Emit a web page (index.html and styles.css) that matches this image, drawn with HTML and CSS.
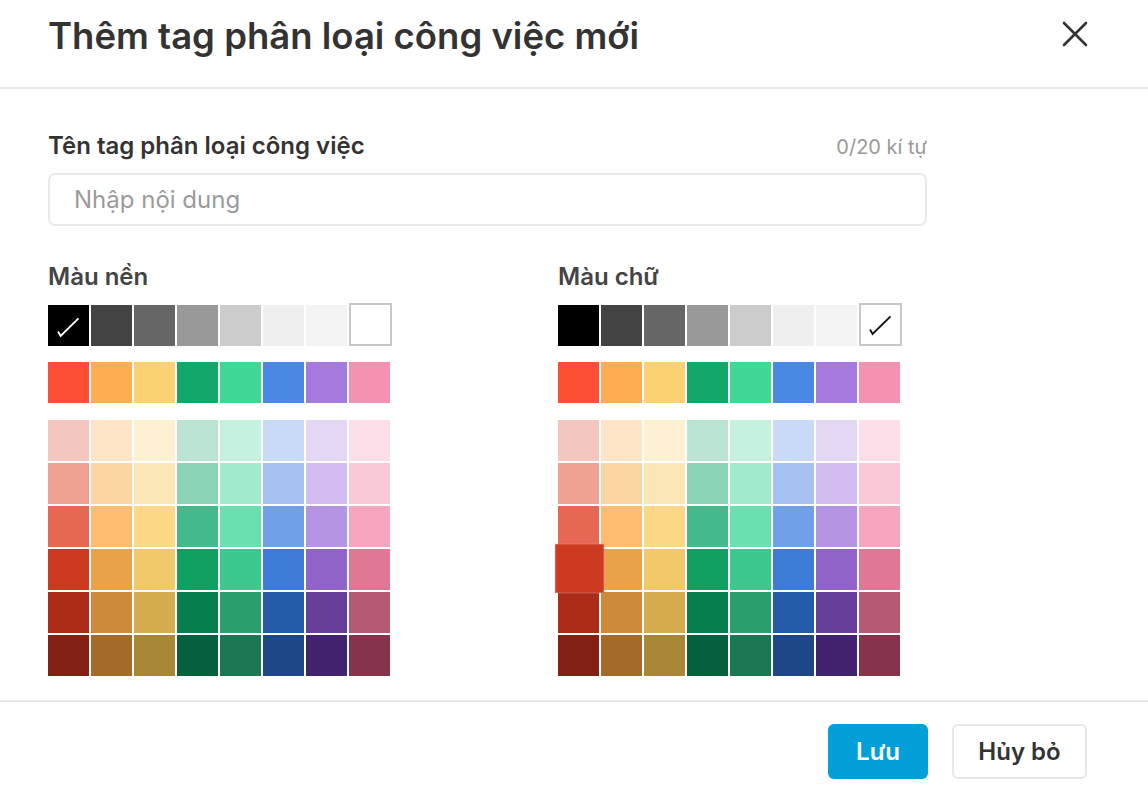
FILE: index.html
```html
<!DOCTYPE html>
<html lang="vi">
<head>
<meta charset="utf-8">
<title>Thêm tag phân loại công việc mới</title>
<link rel="stylesheet" href="styles.css">
</head>
<body>
<div class="modal">
  <header class="modal-header">
    <h1 class="modal-title">Thêm tag phân loại công việc mới</h1>
    <button class="close-btn" type="button" aria-label="Đóng">
      <svg width="26" height="26" viewBox="0 0 26 26"><path d="M2 2 L24 24 M24 2 L2 24" stroke="#333" stroke-width="2.6" stroke-linecap="round" fill="none"/></svg>
    </button>
  </header>

  <main class="modal-body">
    <div class="field">
      <div class="field-head">
        <label class="field-label" for="tagname">Tên tag phân loại công việc</label>
        <span class="field-count">0/20 kí tự</span>
      </div>
      <input id="tagname" class="field-input" type="text" placeholder="Nhập nội dung">
    </div>

    <div class="palettes">
      <section class="palette">
        <h2 class="palette-title">Màu nền</h2>
        <div class="swatch-row">
          <span class="sw" style="background:#000000"><svg class="check" viewBox="0 0 41 41"><path d="M10 26.5 L12.6 31 L30.5 13.3" stroke="#fff" stroke-width="1.8" fill="none"/></svg></span>
          <span class="sw" style="background:#434343"></span>
          <span class="sw" style="background:#666666"></span>
          <span class="sw" style="background:#999999"></span>
          <span class="sw" style="background:#cccccc"></span>
          <span class="sw" style="background:#efefef"></span>
          <span class="sw" style="background:#f3f3f3"></span>
          <span class="sw sw-white" style="background:#ffffff"></span>
        </div>
        <div class="swatch-row row-bright">
          <span class="sw" style="background:#fe4e33"></span>
          <span class="sw" style="background:#ffad52"></span>
          <span class="sw" style="background:#fbd271"></span>
          <span class="sw" style="background:#13a86a"></span>
          <span class="sw" style="background:#41d795"></span>
          <span class="sw" style="background:#4a88e5"></span>
          <span class="sw" style="background:#a67adf"></span>
          <span class="sw" style="background:#f592b2"></span>
        </div>
        <div class="swatch-grid">
          <span class="sw" style="background:#f5c5c0"></span><span class="sw" style="background:#fee5c8"></span><span class="sw" style="background:#fef0d2"></span><span class="sw" style="background:#bbe4d3"></span><span class="sw" style="background:#c7f1df"></span><span class="sw" style="background:#c9daf7"></span><span class="sw" style="background:#e4d7f4"></span><span class="sw" style="background:#fcdee8"></span>
          <span class="sw" style="background:#efa194"></span><span class="sw" style="background:#fdd5a5"></span><span class="sw" style="background:#fbe7b5"></span><span class="sw" style="background:#8bd4b5"></span><span class="sw" style="background:#a1eacb"></span><span class="sw" style="background:#a5c2f3"></span><span class="sw" style="background:#d2bcf0"></span><span class="sw" style="background:#fbc8d8"></span>
          <span class="sw" style="background:#e66754"></span><span class="sw" style="background:#febc71"></span><span class="sw" style="background:#fcd887"></span><span class="sw" style="background:#44b98b"></span><span class="sw" style="background:#6ae0b0"></span><span class="sw" style="background:#6fa0e8"></span><span class="sw" style="background:#b594e4"></span><span class="sw" style="background:#f6a6bf"></span>
          <span class="sw" style="background:#cc3a20"></span><span class="sw" style="background:#e9a24a"></span><span class="sw" style="background:#f0c96a"></span><span class="sw" style="background:#11a062"></span><span class="sw" style="background:#3dc88f"></span><span class="sw" style="background:#3c7bd6"></span><span class="sw" style="background:#9164ca"></span><span class="sw" style="background:#e07795"></span>
          <span class="sw" style="background:#ad2c19"></span><span class="sw" style="background:#ce8a3b"></span><span class="sw" style="background:#d5ad50"></span><span class="sw" style="background:#077f4e"></span><span class="sw" style="background:#2a9e6c"></span><span class="sw" style="background:#255caa"></span><span class="sw" style="background:#663f98"></span><span class="sw" style="background:#b55a72"></span>
          <span class="sw" style="background:#822011"></span><span class="sw" style="background:#a36a29"></span><span class="sw" style="background:#aa8737"></span><span class="sw" style="background:#05603e"></span><span class="sw" style="background:#1b7651"></span><span class="sw" style="background:#1d4786"></span><span class="sw" style="background:#41236d"></span><span class="sw" style="background:#85344c"></span>
        </div>
      </section>

      <section class="palette">
        <h2 class="palette-title">Màu chữ</h2>
        <div class="swatch-row">
          <span class="sw" style="background:#000000"></span>
          <span class="sw" style="background:#434343"></span>
          <span class="sw" style="background:#666666"></span>
          <span class="sw" style="background:#999999"></span>
          <span class="sw" style="background:#cccccc"></span>
          <span class="sw" style="background:#efefef"></span>
          <span class="sw" style="background:#f3f3f3"></span>
          <span class="sw sw-white" style="background:#ffffff"><svg class="check" viewBox="0 0 41 41"><path d="M10 25.5 L12.6 30 L30.5 12.3" stroke="#111" stroke-width="1.8" fill="none"/></svg></span>
        </div>
        <div class="swatch-row row-bright">
          <span class="sw" style="background:#fe4e33"></span>
          <span class="sw" style="background:#ffad52"></span>
          <span class="sw" style="background:#fbd271"></span>
          <span class="sw" style="background:#13a86a"></span>
          <span class="sw" style="background:#41d795"></span>
          <span class="sw" style="background:#4a88e5"></span>
          <span class="sw" style="background:#a67adf"></span>
          <span class="sw" style="background:#f592b2"></span>
        </div>
        <div class="swatch-grid">
          <span class="sw" style="background:#f5c5c0"></span><span class="sw" style="background:#fee5c8"></span><span class="sw" style="background:#fef0d2"></span><span class="sw" style="background:#bbe4d3"></span><span class="sw" style="background:#c7f1df"></span><span class="sw" style="background:#c9daf7"></span><span class="sw" style="background:#e4d7f4"></span><span class="sw" style="background:#fcdee8"></span>
          <span class="sw" style="background:#efa194"></span><span class="sw" style="background:#fdd5a5"></span><span class="sw" style="background:#fbe7b5"></span><span class="sw" style="background:#8bd4b5"></span><span class="sw" style="background:#a1eacb"></span><span class="sw" style="background:#a5c2f3"></span><span class="sw" style="background:#d2bcf0"></span><span class="sw" style="background:#fbc8d8"></span>
          <span class="sw" style="background:#e66754"></span><span class="sw" style="background:#febc71"></span><span class="sw" style="background:#fcd887"></span><span class="sw" style="background:#44b98b"></span><span class="sw" style="background:#6ae0b0"></span><span class="sw" style="background:#6fa0e8"></span><span class="sw" style="background:#b594e4"></span><span class="sw" style="background:#f6a6bf"></span>
          <span class="sw sw-hover" style="background:#cc3a20"></span><span class="sw" style="background:#e9a24a"></span><span class="sw" style="background:#f0c96a"></span><span class="sw" style="background:#11a062"></span><span class="sw" style="background:#3dc88f"></span><span class="sw" style="background:#3c7bd6"></span><span class="sw" style="background:#9164ca"></span><span class="sw" style="background:#e07795"></span>
          <span class="sw" style="background:#ad2c19"></span><span class="sw" style="background:#ce8a3b"></span><span class="sw" style="background:#d5ad50"></span><span class="sw" style="background:#077f4e"></span><span class="sw" style="background:#2a9e6c"></span><span class="sw" style="background:#255caa"></span><span class="sw" style="background:#663f98"></span><span class="sw" style="background:#b55a72"></span>
          <span class="sw" style="background:#822011"></span><span class="sw" style="background:#a36a29"></span><span class="sw" style="background:#aa8737"></span><span class="sw" style="background:#05603e"></span><span class="sw" style="background:#1b7651"></span><span class="sw" style="background:#1d4786"></span><span class="sw" style="background:#41236d"></span><span class="sw" style="background:#85344c"></span>
        </div>
      </section>
    </div>
  </main>

  <footer class="modal-footer">
    <button class="btn btn-primary" type="button">Lưu</button>
    <button class="btn btn-secondary" type="button">Hủy bỏ</button>
  </footer>
</div>
</body>
</html>
```

FILE: styles.css
```css
* { box-sizing: border-box; }

html, body {
  margin: 0;
  padding: 0;
  background: #ffffff;
}

body {
  font-family: Inter, "Noto Sans", "Liberation Sans", sans-serif;
  color: #333333;
}

.modal {
  width: 1148px;
  height: 796px;
  display: flex;
  flex-direction: column;
  background: #fff;
}

/* Header */
.modal-header {
  height: 89px;
  flex: none;
  display: flex;
  align-items: flex-start;
  justify-content: space-between;
  padding: 14px 60px 0 48px;
  border-bottom: 2px solid #e7e9ec;
}

.modal-title {
  margin: 0;
  font-size: 36.5px;
  line-height: 44px;
  font-weight: 600;
  color: #333;
  letter-spacing: 0;
}

.close-btn {
  margin-top: 7px;
  padding: 0;
  border: 0;
  background: transparent;
  width: 26px;
  height: 26px;
  cursor: pointer;
  display: block;
}
.close-btn svg { display: block; }

/* Body */
.modal-body {
  flex: none;
  height: 611px;
  padding: 44px 48px 0 48px;
}

.field { width: 879px; }

.field-head {
  display: flex;
  justify-content: space-between;
  align-items: baseline;
  height: 26px;
  margin-bottom: 14px;
}

.field-label {
  font-size: 24px;
  line-height: 26px;
  font-weight: 600;
  color: #333;
}

.field-count {
  font-size: 20px;
  line-height: 26px;
  color: #999;
}

.field-input {
  display: block;
  width: 100%;
  height: 53px;
  border: 2px solid #e8eaed;
  border-radius: 7px;
  padding: 0 24px;
  font-family: inherit;
  font-size: 24px;
  color: #333;
  outline: none;
}
.field-input::placeholder { color: #9b9b9b; }

/* Palettes */
.palettes {
  display: flex;
  gap: 168px;
  margin-top: 38px;
}

.palette { width: 342px; }

.palette-title {
  margin: 0 0 15px 0;
  font-size: 24px;
  line-height: 26px;
  font-weight: 600;
  color: #444;
}

.swatch-row,
.swatch-grid {
  display: grid;
  grid-template-columns: repeat(8, 41px);
  grid-auto-rows: 41px;
  gap: 2px;
}

.row-bright { margin-top: 16px; }
.swatch-grid { margin-top: 17px; }

.sw {
  display: block;
  position: relative;
}

.sw-white {
  border: 2px solid #c8c8c8;
  margin: -2px -2px 0 0;
}

.check {
  display: block;
  width: 41px;
  height: 41px;
}
.sw-white .check {
  width: 41px;
  height: 41px;
  margin: -1px 0 0 -1px;
}

.sw-hover {
  transform: translate(1px, -1px) scale(1.18);
  z-index: 2;
  box-shadow: 0 0 0 0.5px rgba(230, 170, 160, 0.7);
}

/* Footer */
.modal-footer {
  flex: none;
  border-top: 2px solid #e7e9ec;
  display: flex;
  justify-content: flex-end;
  gap: 24px;
  padding: 22px 61px 0 0;
}

.btn {
  height: 55px;
  border-radius: 6px;
  font-family: inherit;
  font-size: 24px;
  font-weight: 600;
  cursor: pointer;
}

.btn-primary {
  width: 100px;
  background: #039fd9;
  color: #fff;
  border: 0;
}

.btn-secondary {
  width: 135px;
  background: #fff;
  color: #333;
  border: 2px solid #e5e7eb;
}
```
